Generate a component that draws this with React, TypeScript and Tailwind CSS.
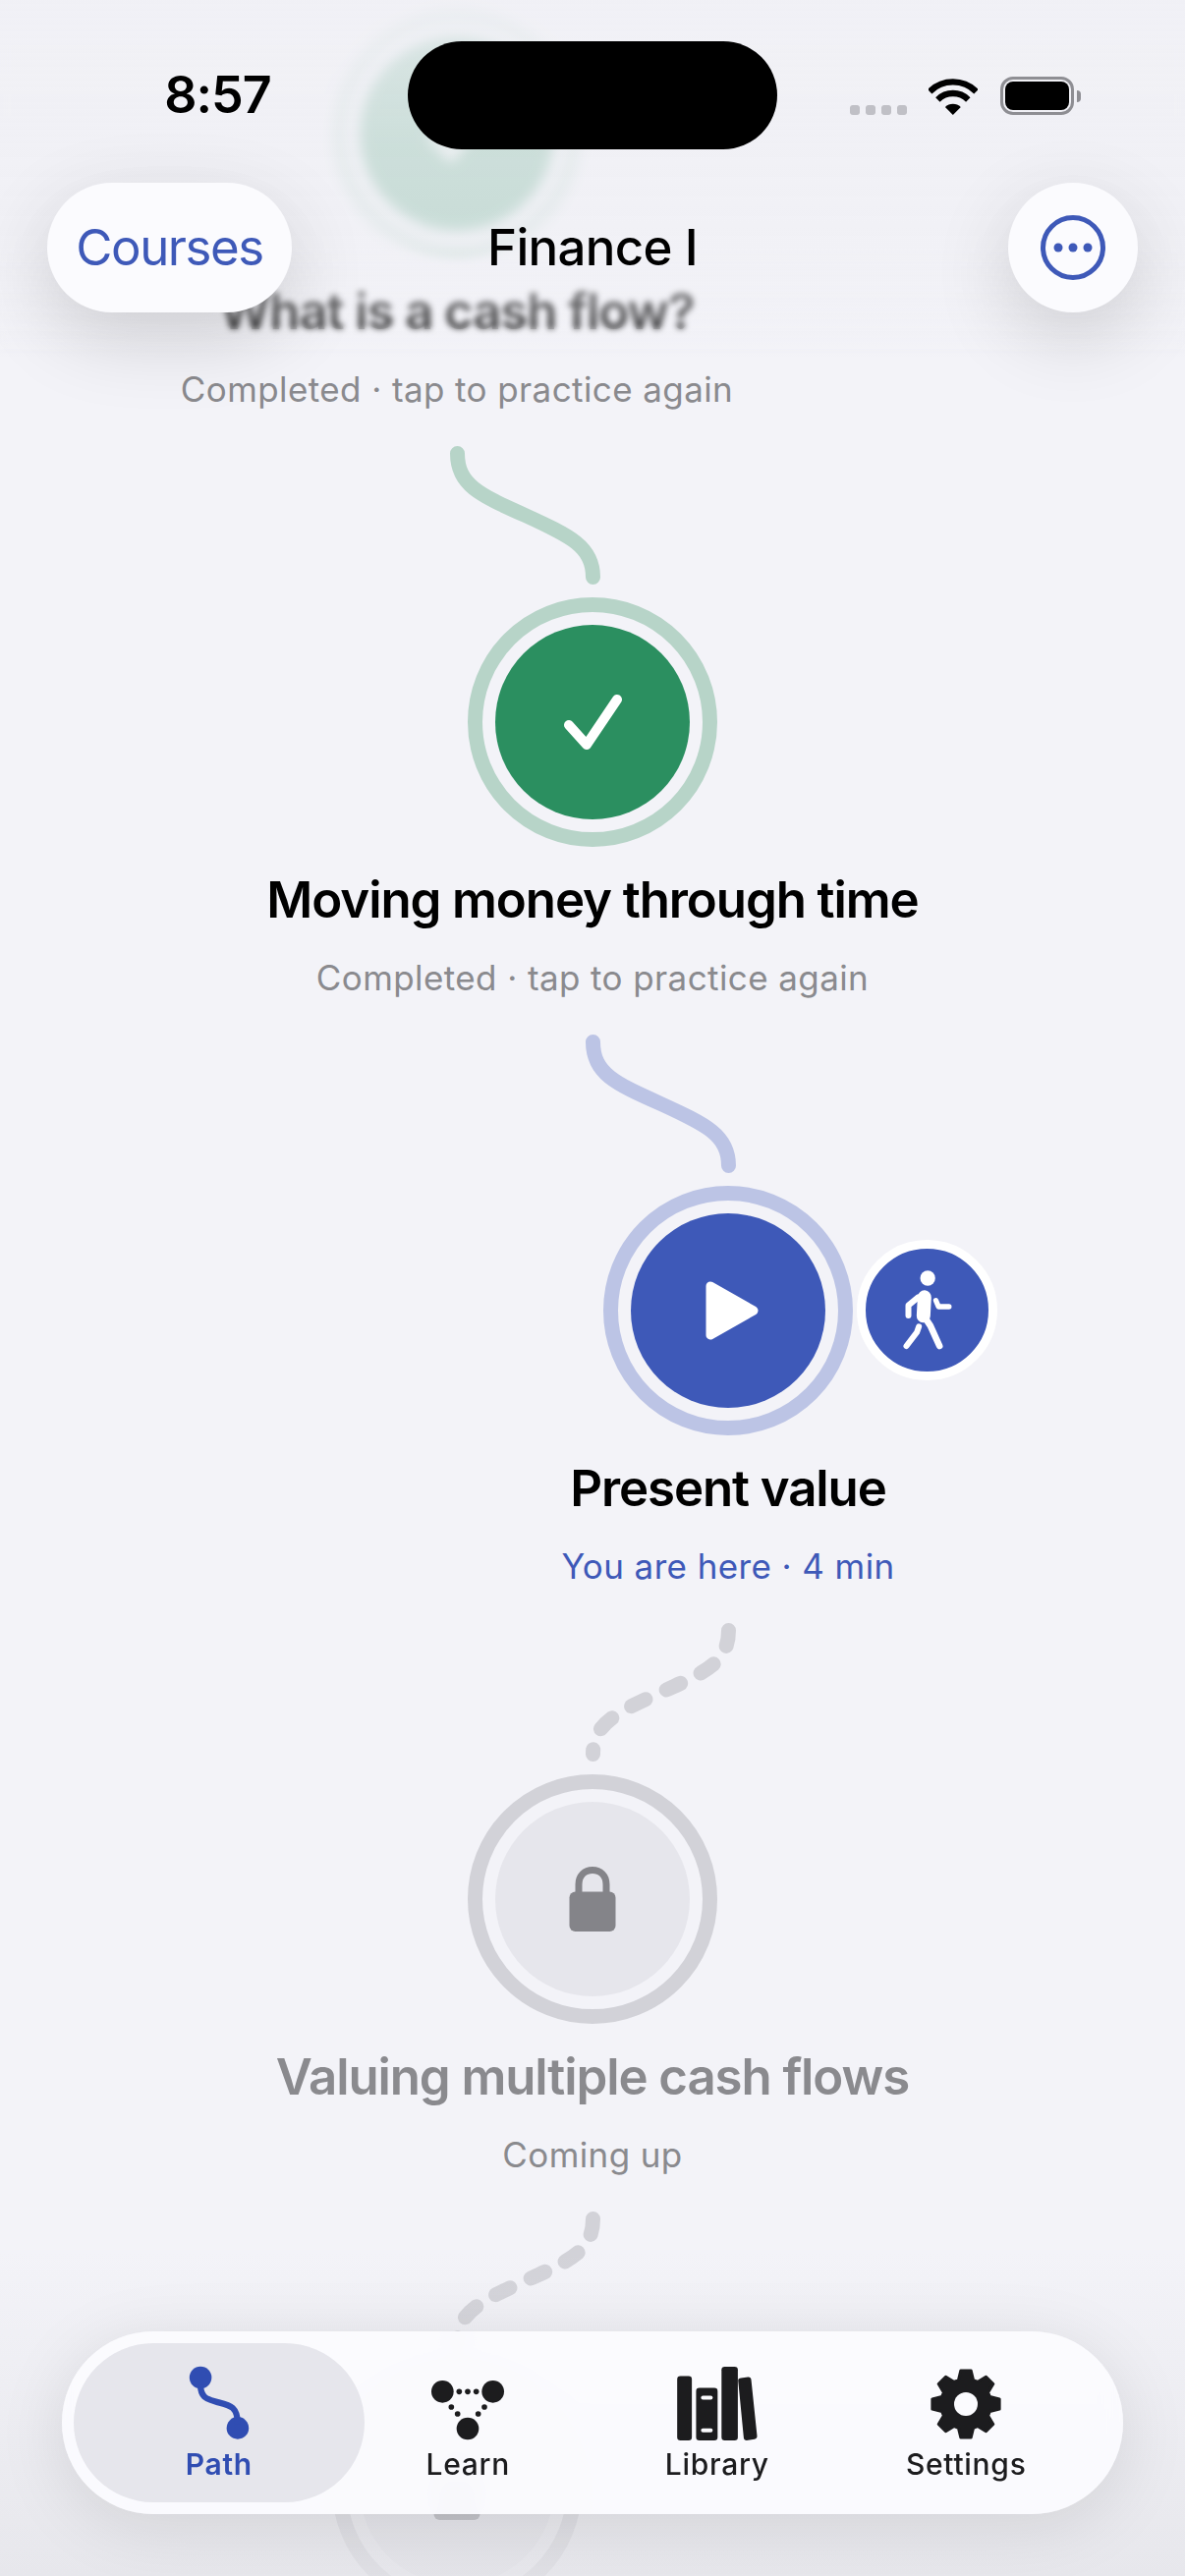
import type { ReactNode } from "react";

const sans = "font-['Inter',sans-serif]";

function CheckIcon() {
  return (
    <svg width="70" height="70" viewBox="-35 -35 70 70" fill="none" stroke="#fff" strokeWidth="10" strokeLinecap="round" strokeLinejoin="round">
      <path d="M-24 3 L-6 23 L25 -23" />
    </svg>
  );
}

function PlayIcon() {
  return (
    <svg width="70" height="70" viewBox="-35 -35 70 70" fill="#fff" stroke="#fff" strokeWidth="9" strokeLinejoin="round">
      <path d="M-18 -25 L26 0 L-18 25 Z" />
    </svg>
  );
}

function LockIcon() {
  return (
    <svg width="48" height="66" viewBox="0 0 48 66" fill="none">
      <path d="M10 30 V18 C10 9 16 3.500 24 3.500 C32 3.500 38 9 38 18 V30" stroke="#848489" strokeWidth="7" />
      <rect x="0.500" y="25.500" width="47" height="40.500" rx="6" fill="#848489" />
    </svg>
  );
}

function WalkIcon() {
  return (
    <svg width="57" height="85" viewBox="1070 780 170 255" fill="none" stroke="#fff" strokeLinecap="round" strokeLinejoin="round">
      <circle cx="1157" cy="810" r="23" fill="#fff" stroke="none" />
      <path d="M1147 868 L1144 925" strokeWidth="42" />
      <path d="M1128 868 L1098 893 L1098 924" strokeWidth="18" />
      <path d="M1145 925 L1165 955 L1193 1017" strokeWidth="20" />
      <path d="M1130 958 L1124 975 L1092 1017" strokeWidth="18" />
      <path d="M1182 878 L1190 897 L1222 897" strokeWidth="16" />
    </svg>
  );
}

// the curve always lands on the centre of the node below it
function Connector({ tone, dashed, flip }: { tone: string; dashed?: boolean; flip?: boolean }) {
  return (
    <svg width="153" height="141" viewBox="-7.500 -7.500 153 141" fill="none" className={flip ? "ml-[138px] -scale-x-100" : "mr-[138px]"}>
      <path
        d="M0 0 C0 32 22 42 69 63 C115 84 138 95 138 126"
        stroke={tone}
        strokeWidth="15"
        strokeLinecap="round"
        strokeDasharray={dashed ? "16 23" : undefined}
      />
    </svg>
  );
}

function Node({
  title,
  subtitle,
  ring,
  disc,
  icon,
  titleClass,
  subtitleClass,
  offsetClass,
  connector,
  badge,
  firstClass,
}: {
  title?: string;
  subtitle?: string;
  ring: string;
  disc: string;
  icon: ReactNode;
  titleClass?: string;
  subtitleClass?: string;
  offsetClass: string;
  connector?: ReactNode;
  badge?: ReactNode;
  firstClass?: string;
}) {
  return (
    <div className={`flex flex-col items-center pb-[34px] ${offsetClass} ${firstClass ?? ""}`}>
      {connector}
      <div className={`relative flex h-[254px] w-[254px] items-center justify-center rounded-full border-[15px] ${ring} ${connector ? "mt-[13px]" : ""}`}>
        <div className={`flex h-[198px] w-[198px] items-center justify-center rounded-full ${disc}`}>{icon}</div>
        {badge}
      </div>
      {title && <div className={`mt-[24px] h-[60px] whitespace-nowrap text-center text-[51px] leading-[60px] font-semibold tracking-[-1.1px] ${titleClass}`}>{title}</div>}
      {subtitle && <div className={`mt-[25px] h-[48px] whitespace-nowrap text-center text-[35px] leading-[48px] tracking-[0.4px] ${subtitleClass}`}>{subtitle}</div>}
    </div>
  );
}

function gearPoints() {
  const pts: string[] = [];
  for (let i = 0; i < 8; i++) {
    const a = (i * Math.PI) / 4;
    const list: [number, number][] = [
      [-0.3, 25.5],
      [-0.15, 34.5],
      [0.15, 34.5],
      [0.3, 25.5],
    ];
    for (const [d, r] of list) {
      pts.push(`${(Math.sin(a + d) * r).toFixed(2)},${(-Math.cos(a + d) * r).toFixed(2)}`);
    }
  }
  return pts.join(" ");
}

function PathIcon() {
  return (
    <svg width="64" height="77" viewBox="391 108 192 232" fill="#304db2">
      <circle cx="430" cy="147" r="34" />
      <circle cx="544" cy="302" r="34" />
      <path d="M430 170 C430 205 445 213 480 222 C520 232 544 235 544 290" fill="none" stroke="#304db2" strokeWidth="19" />
    </svg>
  );
}

function LearnIcon() {
  return (
    <svg width="76" height="62" viewBox="1136 131 228 186" fill="#1c1c1e">
      <circle cx="1173" cy="168" r="34" />
      <circle cx="1327" cy="168" r="34" />
      <circle cx="1250" cy="281" r="34" />
      {[
        [1224, 168],
        [1250, 168],
        [1276, 168],
        [1200, 215],
        [1219, 236],
        [1301, 215],
        [1282, 236],
      ].map(([cx, cy]) => (
        <circle key={`${cx}-${cy}`} cx={cx} cy={cy} r="8.500" />
      ))}
    </svg>
  );
}

function LibraryIcon() {
  return (
    <svg width="82" height="75" viewBox="145 108 246 226" fill="#1c1c1e">
      <rect x="145" y="137" width="45" height="197" rx="10" />
      <rect x="203" y="173" width="66" height="161" rx="10" />
      <rect x="218" y="197" width="36" height="12" rx="6" fill="#fbfbfe" />
      <rect x="218" y="297" width="36" height="12" rx="6" fill="#fbfbfe" />
      <rect x="281" y="108" width="50" height="226" rx="10" />
      <path d="M341 143 L362 140 Q371 139 372 148 L390 320 Q391 329 382 330 L358 334 Q350 334 349 326 L332 150 Q332 144 341 143 Z" />
    </svg>
  );
}

function GearIcon() {
  return (
    <svg width="74" height="74" viewBox="-37 -37 74 74">
      <polygon points={gearPoints()} fill="#1c1c1e" stroke="#1c1c1e" strokeWidth="3" strokeLinejoin="round" />
      <circle r="12" fill="#fbfbfe" />
    </svg>
  );
}

function Tab({ label, icon, active }: { label: string; icon: ReactNode; active?: boolean }) {
  return (
    <div className={`flex h-[162px] flex-col items-center ${active ? "-mx-[21px] rounded-[81px] bg-[#e6e6ec] text-[#304db2]" : "text-[#1c1c1e]"}`}>
      <div className="flex h-[99px] items-end">{icon}</div>
      <div className={`mt-[2px] text-[30px] leading-[44px] tracking-[0.7px] ${active ? "font-semibold" : "font-medium"}`}>{label}</div>
    </div>
  );
}

function WifiIcon() {
  return (
    <svg width="50" height="37" viewBox="376 87 151 111" fill="none" stroke="#000" strokeWidth="19">
      <path d="M379.600 126.600 A101 101 0 0 1 522.400 126.600" />
      <path d="M404.300 151.300 A66 66 0 0 1 497.700 151.300" />
      <path d="M451 198 L427 174 A34 34 0 0 1 475 174 Z" fill="#000" stroke="none" />
    </svg>
  );
}

function StatusBar() {
  return (
    <div className="flex h-[186px] items-start">
      <div className="flex h-[110px] w-[415px] items-center justify-center pl-[28px] pt-[84px] text-[52px] leading-[60px] font-semibold tracking-[-1px] text-black">8:57</div>
      <div className="mt-[42px] h-[110px] w-[376px] rounded-full bg-black" />
      <div className="mt-[78px] flex h-[39px] items-end pl-[74px]">
        <div className="flex gap-[6px]">
          {[0, 1, 2, 3].map((i) => (
            <div key={i} className="h-[10px] w-[10px] rounded-[3px] bg-[#c0c0c6]" />
          ))}
        </div>
        <div className="ml-[22px] flex">
          <WifiIcon />
        </div>
        <div className="ml-[23px] flex h-[39px] items-center">
          <div className="h-[39px] w-[75px] rounded-[13px] border-[3px] border-[#8e8e93] p-[2px]">
            <div className="h-full w-full rounded-[8px] bg-black" />
          </div>
          <div className="ml-[3px] h-[12px] w-[4px] rounded-r-full bg-[#8e8e93]" />
        </div>
      </div>
    </div>
  );
}

function MoreIcon() {
  return (
    <svg width="66" height="66" viewBox="-33 -33 66 66" fill="#3e59b8">
      <circle r="30.500" fill="none" stroke="#3e59b8" strokeWidth="5" />
      <circle cx="-15" r="4.500" />
      <circle r="4.500" />
      <circle cx="15" r="4.500" />
    </svg>
  );
}

export default function App() {
  return (
    <div className={`relative h-[2622px] w-[1206px] overflow-hidden bg-[#f3f3f8] ${sans}`}>
      <Node
        title="What is a cash flow?"
        subtitle="Completed · tap to practice again"
        ring="border-[#b7d4c8]"
        disc="bg-[#2b8f60]"
        icon={<CheckIcon />}
        titleClass="text-black"
        subtitleClass="text-[#8a8a8e]"
        offsetClass="pr-[276px]"
        firstClass="pt-[9px]"
      />
      <Node
        title="Moving money through time"
        subtitle="Completed · tap to practice again"
        ring="border-[#b7d4c8]"
        disc="bg-[#2b8f60]"
        icon={<CheckIcon />}
        titleClass="text-black"
        subtitleClass="text-[#8a8a8e]"
        offsetClass=""
        connector={<Connector tone="#b7d4c8" />}
      />
      <Node
        title="Present value"
        subtitle="You are here · 4 min"
        ring="border-[#bcc4e5]"
        disc="bg-[#3e59b8]"
        icon={<PlayIcon />}
        titleClass="text-black"
        subtitleClass="text-[#3e59b8]"
        offsetClass="pl-[276px]"
        connector={<Connector tone="#bcc4e5" />}
        badge={
          <div className="absolute left-[243px] top-[40px] flex h-[143px] w-[143px] items-center justify-center rounded-full border-[9px] border-white bg-[#3e59b8]">
            <WalkIcon />
          </div>
        }
      />
      <Node
        title="Valuing multiple cash flows"
        subtitle="Coming up"
        ring="border-[#d2d2d8]"
        disc="bg-[#e6e6ec]"
        icon={<LockIcon />}
        titleClass="text-[#8a8a8e]"
        subtitleClass="text-[#8a8a8e]"
        offsetClass=""
        connector={<Connector tone="#d2d2d8" dashed flip />}
      />
      <Node ring="border-[#d2d2d8]" disc="bg-[#e6e6ec]" icon={<LockIcon />} offsetClass="pr-[276px]" connector={<Connector tone="#d2d2d8" dashed flip />} />

      {/* frosted scroll edge under the nav bar: heavier blur up top, light blur down to the title */}
      <div className="absolute inset-x-0 top-0 h-[360px] backdrop-blur-[3px] [mask-image:linear-gradient(to_bottom,black_92%,transparent)]" />
      <div className="absolute inset-x-0 top-0 h-[280px] backdrop-blur-[6px] [mask-image:linear-gradient(to_bottom,black_85%,transparent)]" />
      <div className="absolute inset-x-0 top-0 h-[370px] bg-[linear-gradient(to_bottom,rgba(240,240,245,0.9)_0px,rgba(240,240,245,0.82)_150px,rgba(240,240,245,0.8)_250px,rgba(240,240,245,0.42)_310px,rgba(243,243,248,0)_365px)]" />
      <div className="absolute inset-x-0 bottom-0 h-[330px] bg-gradient-to-b from-[#f3f3f8]/0 to-[#e4e4e9]/80" />

      <div className="absolute inset-x-0 top-0">
        <StatusBar />
        <div className="grid grid-cols-[1fr_auto_1fr] items-center px-[48px]">
          <div className="flex h-[132px] w-[249px] items-center justify-center rounded-full bg-[#fbfbfe] text-[51px] tracking-[-1.5px] text-[#3e59b8] shadow-[0_24px_80px_rgba(0,0,0,0.16)]">Courses</div>
          <div className="text-[51px] font-medium tracking-[-0.7px] text-black">Finance I</div>
          <div className="flex h-[132px] w-[132px] items-center justify-center justify-self-end rounded-full bg-[#fbfbfe] shadow-[0_24px_80px_rgba(0,0,0,0.16)]">
            <MoreIcon />
          </div>
        </div>
      </div>

      <div className="absolute inset-x-[63px] top-[2373px] grid h-[186px] grid-cols-4 items-center rounded-[93px] bg-[#fbfbfe]/95 px-[33px] shadow-[0_12px_70px_rgba(0,0,0,0.1)] backdrop-blur-[10px]">
        <Tab label="Path" icon={<PathIcon />} active />
        <Tab label="Learn" icon={<LearnIcon />} />
        <Tab label="Library" icon={<LibraryIcon />} />
        <Tab label="Settings" icon={<GearIcon />} />
      </div>
    </div>
  );
}
